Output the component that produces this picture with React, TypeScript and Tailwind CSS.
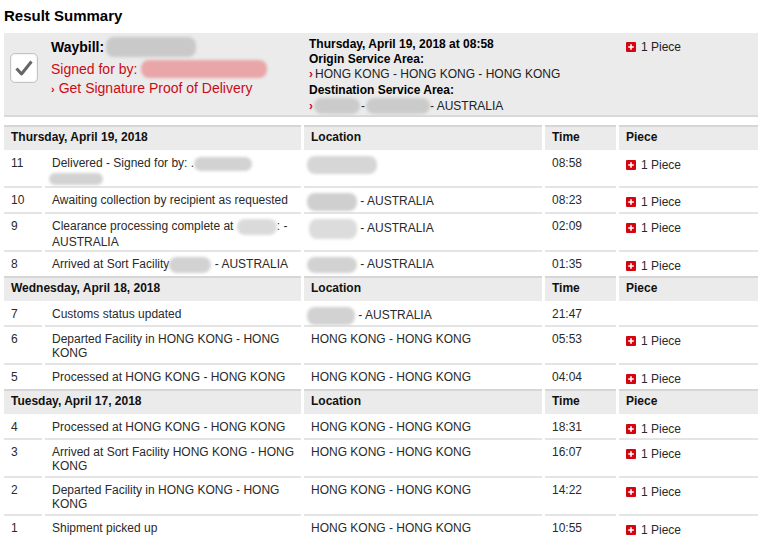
import type { ReactNode } from "react";

// blurred redaction blob, like the masked names in the screenshot
function Blob({ className = "" }: { className?: string }) {
  return <span className={`inline-block align-middle rounded-[8px] blur-[1.5px] ${className}`} />;
}

function PieceIcon() {
  return (
    <svg width="10" height="10" viewBox="0 0 10 10" className="shrink-0">
      <rect width="10" height="10" rx="1" fill="#d40511" />
      <path d="M5 2.2v5.6M2.2 5h5.6" stroke="#fff" strokeWidth="1.6" />
    </svg>
  );
}

function Piece() {
  return (
    <span className="flex items-center gap-[5px]">
      <PieceIcon />
      <span>1 Piece</span>
    </span>
  );
}

type Row = {
  n: number;
  desc: ReactNode;
  loc: ReactNode;
  time: string;
  piece: boolean;
  tall?: boolean;
};

type Group = { date: string; rows: Row[] };

const AU = (blob: string) => (
  <>
    <Blob className={blob} />
    <span> - AUSTRALIA</span>
  </>
);

const HK = "HONG KONG - HONG KONG";

const groups: Group[] = [
  {
    date: "Thursday, April 19, 2018",
    rows: [
      {
        n: 11,
        desc: (
          <>
            Delivered - Signed for by: .<Blob className="w-[58px] h-[14px] bg-[#d2d2d2]" />
            <br />
            <Blob className="w-[54px] h-[12px] bg-[#d2d2d2] -ml-[3px]" />
          </>
        ),
        loc: <Blob className="w-[70px] h-[18px] bg-[#d6d6d6] -ml-[4px]" />,
        time: "08:58",
        piece: true,
        tall: true,
      },
      {
        n: 10,
        desc: "Awaiting collection by recipient as requested",
        loc: AU("w-[50px] h-[18px] bg-[#cfcfcf] -ml-[4px]"),
        time: "08:23",
        piece: true,
      },
      {
        n: 9,
        desc: (
          <>
            Clearance processing complete at <Blob className="w-[40px] h-[16px] bg-[#dadada]" />: -
            <br />
            AUSTRALIA
          </>
        ),
        loc: AU("w-[48px] h-[20px] bg-[#dcdcdc] -ml-[2px]"),
        time: "02:09",
        piece: true,
        tall: true,
      },
      {
        n: 8,
        desc: (
          <>
            Arrived at Sort Facility<Blob className="w-[42px] h-[16px] bg-[#d2d2d2]" /> - AUSTRALIA
          </>
        ),
        loc: AU("w-[50px] h-[16px] bg-[#d2d2d2] -ml-[4px]"),
        time: "01:35",
        piece: true,
      },
    ],
  },
  {
    date: "Wednesday, April 18, 2018",
    rows: [
      {
        n: 7,
        desc: "Customs status updated",
        loc: AU("w-[48px] h-[18px] bg-[#d2d2d2] -ml-[4px]"),
        time: "21:47",
        piece: false,
      },
      {
        n: 6,
        desc: (
          <>
            Departed Facility in HONG KONG - HONG
            <br />
            KONG
          </>
        ),
        loc: HK,
        time: "05:53",
        piece: true,
        tall: true,
      },
      { n: 5, desc: "Processed at HONG KONG - HONG KONG", loc: HK, time: "04:04", piece: true },
    ],
  },
  {
    date: "Tuesday, April 17, 2018",
    rows: [
      { n: 4, desc: "Processed at HONG KONG - HONG KONG", loc: HK, time: "18:31", piece: true },
      {
        n: 3,
        desc: (
          <>
            Arrived at Sort Facility HONG KONG - HONG
            <br />
            KONG
          </>
        ),
        loc: HK,
        time: "16:07",
        piece: true,
        tall: true,
      },
      {
        n: 2,
        desc: (
          <>
            Departed Facility in HONG KONG - HONG
            <br />
            KONG
          </>
        ),
        loc: HK,
        time: "14:22",
        piece: true,
        tall: true,
      },
      { n: 1, desc: "Shipment picked up", loc: HK, time: "10:55", piece: true },
    ],
  },
];

function HeaderRow({ date }: { date: string }) {
  const cell = "h-[25px] bg-[#ebebeb] border-t-2 border-[#d6d6d6] pl-[7px] pt-[3px] font-bold text-[#111]";
  return (
    <div className="flex gap-[3px]">
      <div className={`${cell} w-[297px]`}>{date}</div>
      <div className={`${cell} w-[238px]`}>Location</div>
      <div className={`${cell} w-[71px]`}>Time</div>
      <div className={`${cell} w-[139px]`}>Piece</div>
    </div>
  );
}

function DataRow({ row, first }: { row: Row; first: boolean }) {
  let h = row.tall ? "h-[38px]" : "h-[26px]";
  if (first) h = row.tall ? "h-[36px]" : "h-[24px]";
  const edge = first ? "pt-[6px]" : "border-t-2 border-[#e4e4e4] pt-[5px]";
  const cell = `${h} ${edge} pl-[7px]`;
  return (
    <div className="flex gap-[3px] text-[#2a2a2a]">
      <div className={`${cell} w-[38px]`}>{row.n}</div>
      <div className={`${cell} w-[256px] whitespace-nowrap`}>{row.desc}</div>
      <div className={`${cell} w-[238px] whitespace-nowrap`}>{row.loc}</div>
      <div className={`${cell} w-[71px]`}>{row.time}</div>
      <div className={`${cell} w-[139px]`}>
        {row.piece && (
          <div className="pt-[2px]">
            <Piece />
          </div>
        )}
      </div>
    </div>
  );
}

function Checkbox() {
  return (
    <div className="w-[28px] h-[30px] rounded-[5px] border border-[#c4c4c4] bg-white shadow-[inset_0_0_2px_rgba(0,0,0,0.15)] flex items-center justify-center">
      <svg width="20" height="18" viewBox="0 0 20 18">
        <path d="M2.5 9.5 L7.5 15 L17.5 2.5" fill="none" stroke="#666" strokeWidth="3" strokeLinejoin="round" />
      </svg>
    </div>
  );
}

export default function App() {
  return (
    <div className="w-[758px] h-[552px] bg-white pl-[4px] text-[12px] leading-[14px] font-['Liberation_Sans',Arial,sans-serif] overflow-hidden">
      <h1 className="pt-[7px] text-[15px] leading-[18px] font-bold text-black">Result Summary</h1>

      {/* summary box */}
      <div className="mt-[8px] h-[84px] bg-[#ebebeb] border-b-2 border-[#d9d9d9] flex">
        <div className="w-[36px] pl-[6px] pt-[20px]">
          <Checkbox />
        </div>
        <div className="w-[269px] pl-[11px] pt-[4px] text-[14px] leading-[16px]">
          <div className="h-[20px] flex items-center font-bold text-black">
            Waybill:
            <Blob className="w-[90px] h-[20px] bg-[#c9c9c9] ml-[2px]" />
          </div>
          <div className="mt-[3px] h-[18px] flex items-center text-[#cc0a14]">
            Signed for by:
            <Blob className="w-[126px] h-[18px] bg-[#e9a6a8] ml-[4px]" />
          </div>
          <div className="mt-[2px] text-[#cc0a14] whitespace-nowrap">
            <span className="text-[11px] font-bold mr-[4px]">›</span>Get Signature Proof of Delivery
          </div>
        </div>
        <div className="w-[317px] pl-0 pt-[4px] leading-[15px] text-[#222] whitespace-nowrap">
          <div className="font-bold text-black">Thursday, April 19, 2018 at 08:58</div>
          <div className="font-bold text-black">Origin Service Area:</div>
          <div>
            <span className="text-[#cc0a14] font-bold mr-[2px]">›</span>HONG KONG - HONG KONG - HONG KONG
          </div>
          <div className="font-bold text-black mt-[1px]">Destination Service Area:</div>
          <div className="flex items-center">
            <span className="text-[#cc0a14] font-bold mr-[1px]">›</span>
            <Blob className="w-[46px] h-[16px] bg-[#cbcbcb]" />
            <span className="mx-[1px]">-</span>
            <Blob className="w-[64px] h-[16px] bg-[#cbcbcb]" />
            <span> - AUSTRALIA</span>
          </div>
        </div>
        <div className="pt-[7px] text-[#222]">
          <Piece />
        </div>
      </div>

      {/* history table */}
      <div className="mt-[8px]">
        {groups.map((g) => (
          <div key={g.date}>
            <HeaderRow date={g.date} />
            {g.rows.map((r, i) => (
              <DataRow key={r.n} row={r} first={i === 0} />
            ))}
          </div>
        ))}
      </div>
    </div>
  );
}
